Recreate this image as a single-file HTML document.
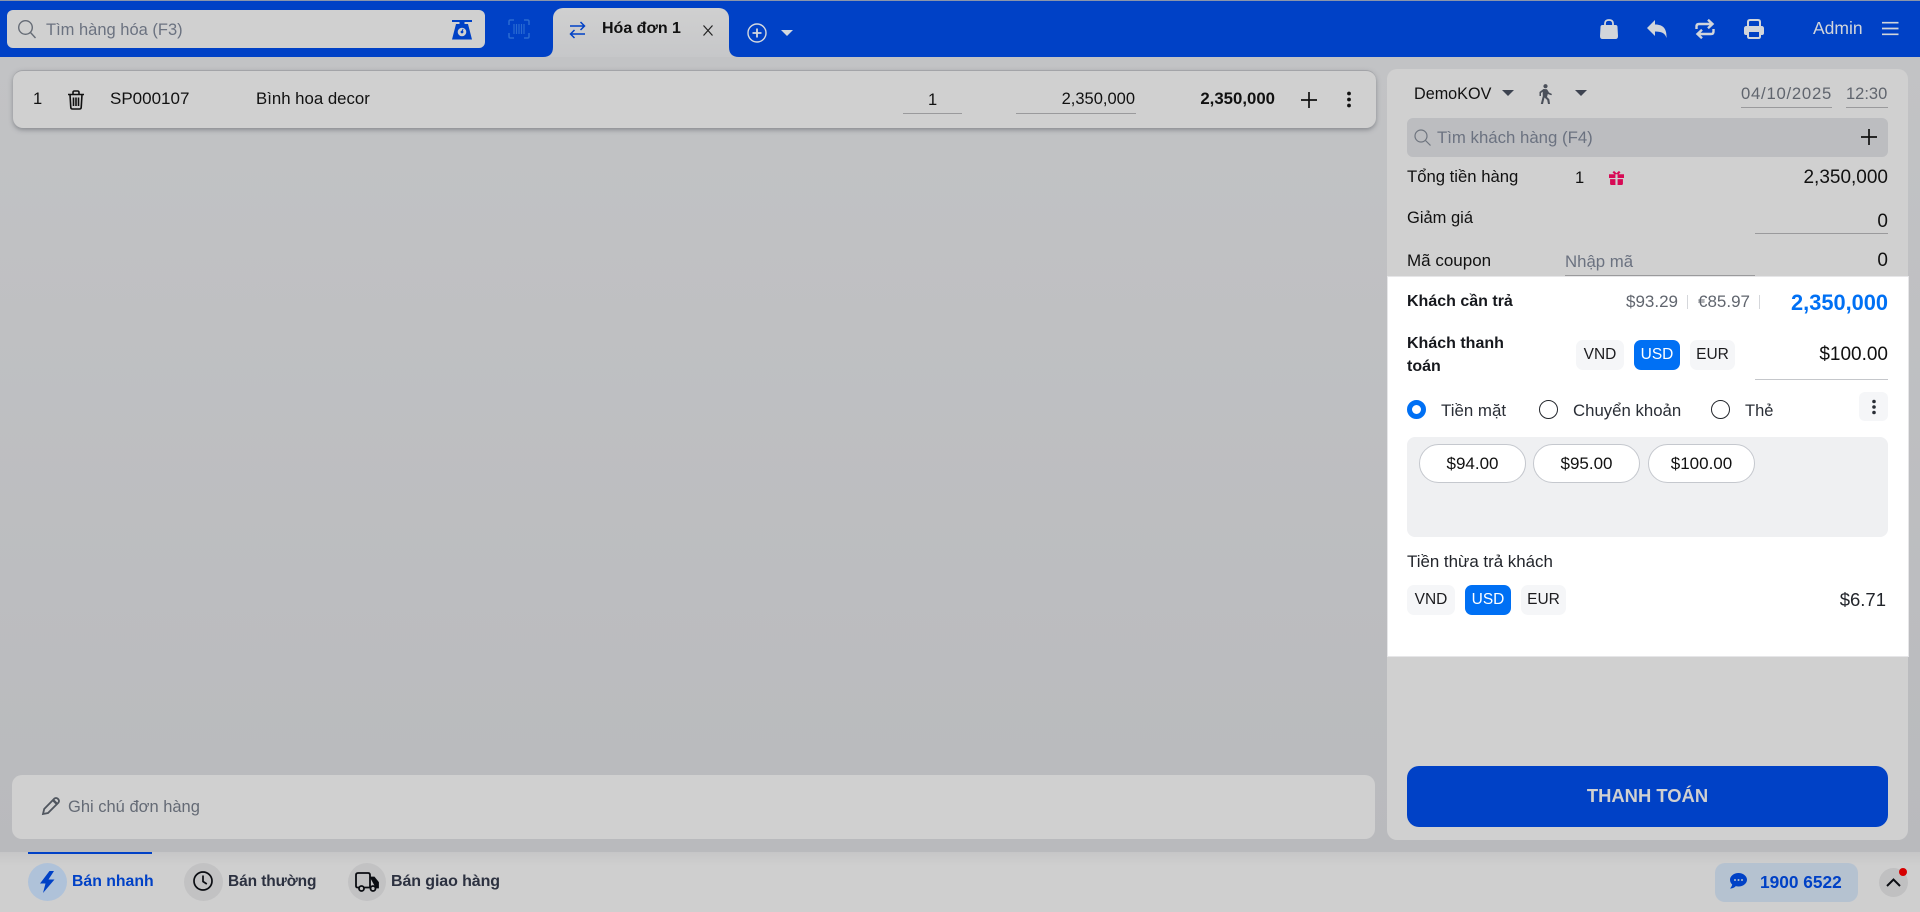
<!DOCTYPE html>
<html lang="vi"><head><meta charset="utf-8"><title>Hóa đơn 1</title>
<style>
*{box-sizing:border-box}
html,body{margin:0;padding:0}
body{width:1920px;height:912px;overflow:hidden;position:relative;background:#bec0c3;font-family:"Liberation Sans",sans-serif;font-size:16.5px;color:#111}
.a{position:absolute}
.t{position:absolute;white-space:nowrap;line-height:20px;height:20px;margin-top:1px}
.n{margin-top:0}
.b{font-weight:700;font-size:16px}
.u{position:absolute;height:1px;background:#9a9a9c}
.cur{position:absolute;height:30px;border-radius:7px;background:#f5f6f8;text-align:center;line-height:30px;font-size:15.5px;color:#1c1c1f}
.cur.on{background:#0070f4;color:#fff}
.pill{position:absolute;top:444px;width:107px;height:39px;border-radius:20px;background:#fff;border:1px solid #c5c8ce;text-align:center;line-height:37px;font-size:17px}
.rad{position:absolute;top:399.5px;width:19px;height:19px;border-radius:50%;border:1.5px solid #23262c;background:#fff}
.car{position:absolute;width:0;height:0;border-left:6px solid transparent;border-right:6px solid transparent;border-top:6px solid #3d4350}
svg{position:absolute;overflow:visible}
</style></head><body>

<div class="a" style="left:0;top:0;width:1920px;height:57px;background:#0041c6;border-top:1px solid #8b95aa"></div>
<div class="a" style="left:0;top:57px;width:1920px;height:795px;background:linear-gradient(#c2c3c5,#b9babd)"></div>

<!-- search -->
<div class="a" style="left:7px;top:10px;width:478px;height:38px;background:#d0d0d0;border-radius:6px"></div>
<svg style="left:17px;top:19px" width="20" height="20" viewBox="0 0 20 20" fill="none" stroke="#666c76" stroke-width="1.4"><circle cx="8.5" cy="8.5" r="6.8"/><path d="M13.5 13.5l5 5.5"/></svg>
<div class="t" style="left:46px;top:19px;color:#6b7280">Tìm hàng hóa (F3)</div>
<svg style="left:452px;top:20px" width="20" height="20" viewBox="0 0 20 20"><path d="M0 0h20v2h-7.5v2h3.5l4 15.500H0L4 4h3.500V2H0z" fill="#0041c6"/><circle cx="10" cy="12" r="4.300" fill="#d0d0d0"/><circle cx="10" cy="12" r="1.400" fill="#0041c6"/><path d="M10 12l1-3" stroke="#0041c6" stroke-width="1"/></svg>
<svg style="left:508px;top:19px" width="22" height="20" viewBox="0 0 22 20" fill="none" stroke="#2a6bd2" stroke-width="1.500"><path d="M1 6V2.500Q1 1 2.500 1H6M16 1h3.500Q21 1 21 2.500V6M21 14v3.500Q21 19 19.500 19H16M6 19H2.500Q1 19 1 17.500V14"/><path d="M6 5v10M8.500 5v10M11 5v10M13.500 5v10M16 5v10" stroke-width="1.200"/></svg>

<!-- tab -->
<div class="a" style="left:553px;top:8px;width:176px;height:49px;border-radius:10px 10px 0 0;background:linear-gradient(#d0d0d0,#c6c7c9)"></div>
<svg style="left:543px;top:47px" width="10" height="10" viewBox="0 0 10 10"><path d="M10 0v10H0Q10 10 10 0z" fill="#c6c7c9"/></svg>
<svg style="left:729px;top:47px" width="10" height="10" viewBox="0 0 10 10"><path d="M0 0v10h10Q0 10 0 0z" fill="#c6c7c9"/></svg>
<svg style="left:569px;top:21px" width="17" height="18" viewBox="0 0 17 18" fill="none" stroke="#0041c6" stroke-width="1.500"><path d="M1 5h14.500M11.500 1l4 4-4 4M16 13H1.500M5.500 9l-4 4 4 4"/></svg>
<div class="t b" style="left:602px;top:18px">Hóa đơn 1</div>
<svg style="left:703px;top:25px" width="10" height="11" viewBox="0 0 10 11" stroke="#222" stroke-width="1.200"><path d="M.5.500l9 10M9.500.500l-9 10"/></svg>
<svg style="left:747px;top:23px" width="20" height="20" viewBox="0 0 20 20" fill="none" stroke="#d4d8de" stroke-width="1.400"><circle cx="10" cy="10" r="9"/><path d="M10 5.500v9M5.500 10h9" stroke-width="1.800"/></svg>
<div class="car" style="left:781px;top:30px;border-top-color:#d4d8de"></div>

<!-- topbar right -->
<svg style="left:1600px;top:19px" width="18" height="20" viewBox="0 0 18 20" fill="#d2d5da"><path d="M2.500 6h13Q17.500 6 17.500 8l.5 9Q18 20 15.500 20h-13Q0 20 0 17l.5-9Q.5 6 2.500 6z"/><path d="M5 8V4.500Q5 1 9 1t4 3.500V8" fill="none" stroke="#d2d5da" stroke-width="1.800"/></svg>
<svg style="left:1647px;top:20px" width="20" height="18" viewBox="0 0 20 18" fill="#d2d5da"><path d="M8 0v4.500C15 4.500 20 7.500 19.500 18c-1.500-5-5-6.500-11.500-6.500V16L0 8z"/></svg>
<svg style="left:1695px;top:19px" width="20" height="20" viewBox="0 0 20 20" fill="none" stroke="#d2d5da" stroke-width="2.400"><path d="M1.500 10V7.500Q1.500 5 4 5h12M13 .800l4.500 4.200L13 9.200M18.500 10v2.500Q18.500 15 16 15H4M7 10.800L2.500 15 7 19.200"/></svg>
<svg style="left:1744px;top:19px" width="20" height="20" viewBox="0 0 20 20" fill="#d2d5da"><path fill-rule="evenodd" d="M3 7V3q0-3 3-3h8q3 0 3 3v4h.5Q20 7 20 9.500V14q0 2-2 2h-1v1.500q0 2.500-2.500 2.500h-9Q3 20 3 17.500V16H2q-2 0-2-2V9.500Q0 7 2.500 7zM5 7h10V3q0-1-1-1H6Q5 2 5 3zm0 6v4.500q0 .5.500.5h9q.5 0 .5-.5V13z"/></svg>
<div class="t" style="left:1813px;top:17px;color:#d2d5da;font-size:17.500px">Admin</div>
<svg style="left:1882px;top:21px" width="16.500" height="15" viewBox="0 0 17 15" stroke="#d2d5da" stroke-width="1.700"><path d="M0 1.500h17M0 7.500h17M0 13.500h17"/></svg>

<!-- item row -->
<div class="a" style="left:13px;top:70px;width:1363px;height:58px;background:#d0d0d0;border-radius:10px;border-top:1px solid #a3a4a8;box-shadow:0 2px 5px rgba(90,92,100,.55)"></div>
<div class="t" style="left:33px;top:88px">1</div>
<svg style="left:67px;top:90px" width="18" height="20" viewBox="0 0 18 20" fill="none" stroke="#111" stroke-width="1.600"><path d="M1 4.500h16M6 4V2.500Q6 1 7.500 1h3Q12 1 12 2.500V4M3 4.500l.8 13Q4 19 5.500 19h7q1.500 0 1.700-1.500l.8-13M6.500 7.500v8.500M9 7.500v8.500M11.500 7.500v8.500"/></svg>
<div class="t" style="left:110px;top:88px;font-size:17px">SP000107</div>
<div class="t" style="left:256px;top:88px;font-size:16.800px">Bình hoa decor</div>
<div class="t" style="left:928px;top:88.500px">1</div>
<div class="u" style="left:903px;top:113px;width:59px"></div>
<div class="t" style="right:785px;top:88px">2,350,000</div>
<div class="u" style="left:1016px;top:113px;width:120px"></div>
<div class="t b" style="right:645px;top:88px;font-size:16.800px">2,350,000</div>
<svg style="left:1301px;top:92px" width="16" height="16" viewBox="0 0 16 16" stroke="#111" stroke-width="1.700"><path d="M8 0v16M0 8h16"/></svg>
<svg style="left:1346px;top:91px" width="6" height="17" viewBox="0 0 6 17" fill="#111"><circle cx="3" cy="2.500" r="1.900"/><circle cx="3" cy="8.500" r="1.900"/><circle cx="3" cy="14.500" r="1.900"/></svg>

<!-- note -->
<div class="a" style="left:12px;top:775px;width:1363px;height:64px;background:#d0d0d0;border-radius:10px"></div>
<svg style="left:42px;top:797px" width="18" height="18" viewBox="0 0 18 18" fill="none" stroke="#50565f" stroke-width="1.800"><path d="M1 17l1.200-5L12.500 1.500Q14 .5 15.500 1.500l1 1q1 1.500 0 3L6 16z"/><path d="M11 3l4.500 4.500" stroke-width="2.400"/></svg>
<div class="t" style="left:68px;top:796px;color:#646a75">Ghi chú đơn hàng</div>

<!-- right panel -->
<div class="a" style="left:1387px;top:69px;width:521px;height:771px;background:#d0d0d0;border-radius:10px"></div>
<div class="t" style="left:1414px;top:83px;font-size:16.200px">DemoKOV</div>
<div class="car" style="left:1502px;top:90px"></div>
<svg style="left:1538px;top:84px" width="14" height="20" viewBox="0 0 14 20" fill="#4b505a"><circle cx="7.500" cy="2.200" r="2.100"/><path d="M5.500 5L9 5.200l2 3.300 3 1.500-.7 1.300L9.800 10l-.8 3 2.300 2.300.7 4.700H10l-.8-4-2.700-2.500L5 20H2.800l2-8-.1-4.200L3 9v3H1.500V8z"/></svg>
<div class="car" style="left:1575px;top:90px"></div>
<div class="t" style="left:1741px;top:83px;color:#60656e;font-size:16.700px;letter-spacing:.75px">04/10/2025</div>
<div class="u" style="left:1741px;top:107px;width:91px"></div>
<div class="t" style="left:1846px;top:83px;color:#60656e;font-size:16.500px">12:30</div>
<div class="u" style="left:1846px;top:107px;width:42px"></div>

<div class="a" style="left:1407px;top:118px;width:481px;height:39px;background:#bcbdc0;border-radius:6px"></div>
<svg style="left:1414px;top:129px" width="17" height="17" viewBox="0 0 17 17" fill="none" stroke="#6e747e" stroke-width="1.200"><circle cx="7" cy="7" r="6"/><path d="M11.500 11.500l5 5"/></svg>
<div class="t" style="left:1437px;top:127px;color:#6b7280;font-size:16.800px">Tìm khách hàng (F4)</div>
<svg style="left:1861px;top:129px" width="16" height="16" viewBox="0 0 16 16" stroke="#111" stroke-width="1.700"><path d="M8 0v16M0 8h16"/></svg>

<div class="t" style="left:1407px;top:166px;font-size:16.700px">Tổng tiền hàng</div>
<div class="t" style="left:1575px;top:167px">1</div>
<svg style="left:1609px;top:171px" width="15" height="14" viewBox="0 0 14 13" fill="#d70a55"><path d="M0 3h14v3.500H0zM1 7.500h12V12q0 1-1 1H2q-1 0-1-1z"/><path d="M7 3.500L4 .500M7 3.500l3-3" stroke="#d70a55" stroke-width="2"/><path d="M6 3h2v10H6z" fill="#d0d0d0"/></svg>
<div class="t n" style="right:32px;top:168px;font-size:19px">2,350,000</div>
<div class="t" style="left:1407px;top:207px">Giảm giá</div>
<div class="t n" style="right:32px;top:211.500px;font-size:19px">0</div>
<div class="u" style="left:1755px;top:233px;width:133px"></div>
<div class="t" style="left:1407px;top:250px;font-size:17px">Mã coupon</div>
<div class="t" style="left:1565px;top:250.500px;color:#6b7280;font-size:16.800px">Nhập mã</div>
<div class="u" style="left:1565px;top:275px;width:190px"></div>
<div class="t n" style="right:32px;top:251px;font-size:19px">0</div>

<!-- white highlighted -->
<div class="a" style="left:1388px;top:277px;width:520px;height:379px;background:#fff;box-shadow:0 0 0 1px #e6e6e8"></div>
<div class="t b" style="left:1407px;top:290.500px;color:#16181d">Khách cần trả</div>
<div class="t" style="left:1626px;top:291px;color:#60656e;font-size:17px">$93.29</div>
<div class="a" style="left:1687px;top:295px;width:1px;height:14px;background:#d5d7db"></div>
<div class="t" style="left:1698px;top:291px;color:#60656e;font-size:17px">€85.97</div>
<div class="a" style="left:1759px;top:295px;width:1px;height:14px;background:#d5d7db"></div>
<div class="t b n" style="right:32px;top:293px;font-size:21.800px;color:#0070f4">2,350,000</div>
<div class="t b" style="left:1407px;top:333px;color:#16181d">Khách thanh</div>
<div class="t b" style="left:1407px;top:356px;color:#16181d">toán</div>
<div class="cur" style="left:1576px;top:340px;width:48px">VND</div>
<div class="cur on" style="left:1634px;top:340px;width:46px">USD</div>
<div class="cur" style="left:1690px;top:340px;width:45px">EUR</div>
<div class="t n" style="right:32px;top:344.500px;font-size:19px">$100.00</div>
<div class="a" style="left:1755px;top:379px;width:133px;height:1px;background:#c5c7cb"></div>

<div class="rad" style="left:1407px;border:5.500px solid #0070f4"></div>
<div class="t" style="left:1441px;top:399.500px;color:#2a2e36;font-size:16.900px">Tiền mặt</div>
<div class="rad" style="left:1538.500px"></div>
<div class="t" style="left:1573px;top:399.500px;color:#2a2e36;font-size:16.800px">Chuyển khoản</div>
<div class="rad" style="left:1710.500px"></div>
<div class="t" style="left:1745px;top:399.500px;color:#2a2e36;font-size:16.500px">Thẻ</div>
<div class="a" style="left:1859px;top:392px;width:29px;height:29px;background:#f5f6f8;border-radius:6px"></div>
<svg style="left:1871px;top:399px" width="6" height="16" viewBox="0 0 6 16" fill="#2a2e36"><circle cx="3" cy="2.500" r="1.800"/><circle cx="3" cy="8" r="1.800"/><circle cx="3" cy="13.500" r="1.800"/></svg>

<div class="a" style="left:1407px;top:437px;width:481px;height:100px;background:#eff0f2;border-radius:8px"></div>
<div class="pill" style="left:1419px">$94.00</div>
<div class="pill" style="left:1533px">$95.00</div>
<div class="pill" style="left:1648px">$100.00</div>

<div class="t" style="left:1407px;top:551px;color:#22252b;font-size:16.900px">Tiền thừa trả khách</div>
<div class="cur" style="left:1407px;top:585px;width:48px">VND</div>
<div class="cur on" style="left:1465px;top:585px;width:46px">USD</div>
<div class="cur" style="left:1521px;top:585px;width:45px">EUR</div>
<div class="t n" style="right:34px;top:590px;font-size:18.500px;color:#22252b">$6.71</div>

<div class="a" style="left:1407px;top:766px;width:481px;height:61px;background:#0041c6;border-radius:12px"></div>
<div class="t b n" style="left:1407px;width:481px;top:786px;font-size:18.400px;text-align:center;color:#d0d0d0">THANH TOÁN</div>

<!-- bottom bar -->
<div class="a" style="left:0;top:852px;width:1920px;height:60px;background:linear-gradient(#c6c6c7,#cfcfcf 14px)"></div>
<div class="a" style="left:28px;top:852px;width:124px;height:2px;background:#0041c6"></div>
<div class="a" style="left:28px;top:863px;width:39px;height:38px;border-radius:50%;background:#afc2d9"></div>
<svg style="left:40px;top:871px" width="15" height="22" viewBox="0 0 15 22" fill="#0041c6"><path d="M9.500 0L0 12.500h5.500L3 22l11.500-13.500H8.500L14 0z"/></svg>
<div class="t b" style="left:72px;top:870.500px;color:#0041c6;font-size:15.800px">Bán nhanh</div>
<div class="a" style="left:184px;top:863px;width:39px;height:38px;border-radius:50%;background:#c2c2c3"></div>
<svg style="left:193px;top:871px" width="20" height="20" viewBox="0 0 20 20" fill="none" stroke="#0b0d12" stroke-width="1.700"><circle cx="10" cy="10" r="9"/><path d="M10 4.500V10.500l3.800 2.500"/></svg>
<div class="t b" style="left:228px;top:870.500px;color:#2c3140;font-size:15.500px;letter-spacing:-.1px">Bán thường</div>
<div class="a" style="left:348px;top:863px;width:38px;height:38px;border-radius:50%;background:#c2c2c3"></div>
<svg style="left:355px;top:872px" width="24" height="20" viewBox="0 0 24 20" fill="none" stroke="#0b0d12" stroke-width="1.800"><path d="M4 15.500H2.500Q1 15.500 1 14V3q0-2 2-2h10q2 0 2 2v12.500H9"/><path d="M15 5.500h4l4 5V15.500h-2.500M15 15.500h1" fill="#0b0d12"/><circle cx="6.500" cy="16.500" r="2.500"/><circle cx="18" cy="16.500" r="2.500"/></svg>
<div class="t b" style="left:391px;top:870.500px;color:#2c3140;letter-spacing:-.1px">Bán giao hàng</div>

<div class="a" style="left:1715px;top:863px;width:143px;height:39px;border-radius:10px;background:#b5c2d0"></div>
<svg style="left:1730px;top:873px" width="17" height="16" viewBox="0 0 17 16"><path d="M8.500 0C13 0 17 3 17 6.800S13 13.500 8.500 13.500c-1 0-1.800-.1-2.700-.4C4.500 14.500 2.500 15.500 0 15.500c1.200-1.200 2-2.700 2.200-4C.8 10.300 0 8.700 0 6.800 0 3 4 0 8.500 0z" fill="#0041c6"/><circle cx="5" cy="7" r="1" fill="#b5c2d0"/><circle cx="8.500" cy="7" r="1" fill="#b5c2d0"/><circle cx="12" cy="7" r="1" fill="#b5c2d0"/></svg>
<div class="t b" style="left:1760px;top:870.500px;color:#0041c6;font-size:17.300px">1900 6522</div>
<div class="a" style="left:1879px;top:868px;width:29px;height:29px;border-radius:50%;background:#c0c0c1"></div>
<svg style="left:1886px;top:878px" width="15" height="9" viewBox="0 0 15 9" fill="none" stroke="#0b0d12" stroke-width="2"><path d="M1 8l6.500-6.500L14 8"/></svg>
<div class="a" style="left:1899px;top:868px;width:8px;height:8px;border-radius:50%;background:#d60000"></div>
</body></html>
